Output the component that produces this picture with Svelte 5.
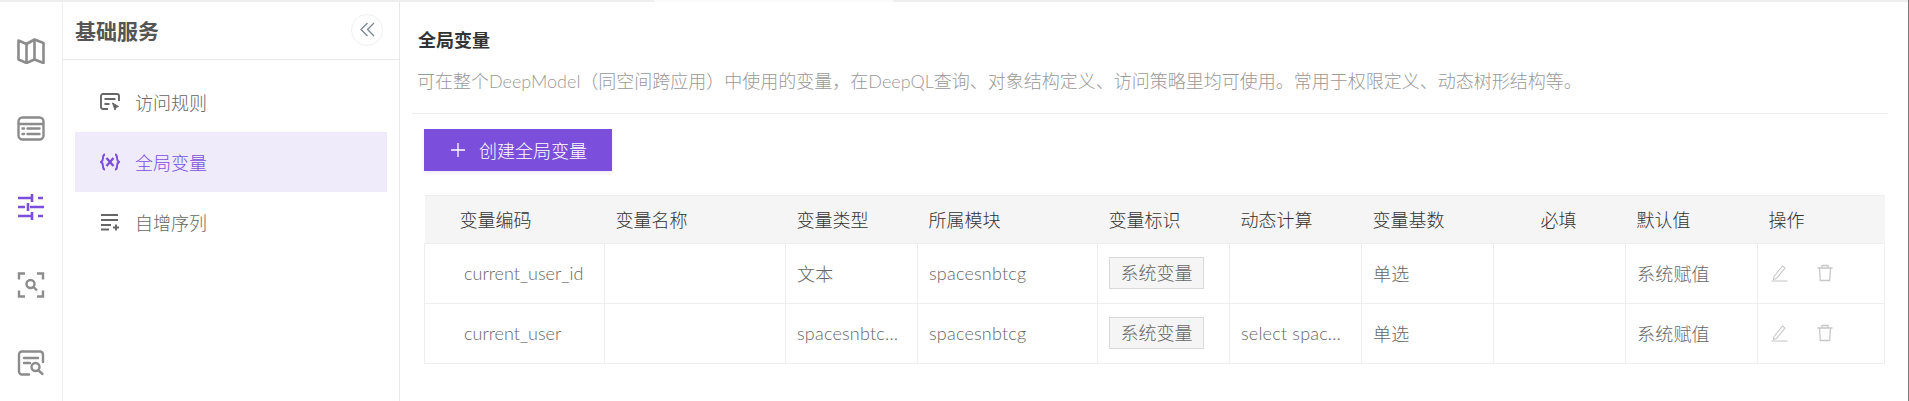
<script>
  const columns = [
    { title: "变量编码", width: 180, indent: true },
    { title: "变量名称", width: 181 },
    { title: "变量类型", width: 132 },
    { title: "所属模块", width: 180 },
    { title: "变量标识", width: 132 },
    { title: "动态计算", width: 132 },
    { title: "变量基数", width: 132 },
    { title: "必填", width: 132, center: true },
    { title: "默认值", width: 132 },
    { title: "操作", width: 127 },
  ];

  const rows = [
    { code: "current_user_id", name: "", type: "文本", module: "spacesnbtcg", calc: "", base: "单选", value: "系统赋值" },
    { code: "current_user", name: "", type: "spacesnbtcg_user", module: "spacesnbtcg", calc: "select spaces from user", base: "单选", value: "系统赋值" },
  ];
</script>

<div class="page">
  <div class="topbar">
    <span class="tab"></span>
  </div>
  <div class="layout">
    <nav class="rail">
      <button type="button" class="rail-btn" aria-label="地图">
        <svg width="28" height="26" viewBox="0 0 28 26" fill="none" stroke="currentColor" stroke-width="2.600" stroke-linejoin="round">
          <path d="M1.500 2.500 9.500 6l8-4.500 9 3.500v20l-9-3.500-8 3.500-8-3.500z" />
          <path d="M9.500 6v18.500M17.500 1.500V21" />
        </svg>
      </button>
      <button type="button" class="rail-btn" aria-label="列表">
        <svg width="28" height="26" viewBox="0 0 28 26" fill="none" stroke="currentColor" stroke-width="2.400" stroke-linecap="round">
          <rect x="1.500" y="1.500" width="25" height="22" rx="4" />
          <path d="M2 8h24M5.500 12.500h1.500M10.500 12.500h12M5.500 18h1.500M10.500 18h12" />
        </svg>
      </button>
      <button type="button" class="rail-btn active" aria-label="设置">
        <svg width="28" height="26" viewBox="0 0 28 26" fill="none" stroke="currentColor" stroke-width="2.600">
          <path d="M1 4h15M21 4h5M1 13h7M13 13h14M1 22h15M21 22h5" />
          <path d="M15 0v8M11 9v8M15 18v8" />
        </svg>
      </button>
      <button type="button" class="rail-btn" aria-label="扫描">
        <svg width="28" height="26" viewBox="0 0 28 26" fill="none" stroke="currentColor" stroke-width="2.400">
          <path d="M8 1.500H2v6M20 1.500h6v6M8 24.500H2v-6M20 24.500h6v-6" />
          <circle cx="13.500" cy="12" r="4" />
          <path d="m16.500 15 3.500 3.500" />
        </svg>
      </button>
      <button type="button" class="rail-btn" aria-label="查询">
        <svg width="28" height="26" viewBox="0 0 28 26" fill="none" stroke="currentColor" stroke-width="2.400" stroke-linecap="round">
          <path d="M12 24.500H5a3 3 0 0 1-3-3v-17a3 3 0 0 1 3-3h18a3 3 0 0 1 3 3V12" />
          <path d="M7 8h14M7 13h6" />
          <circle cx="18.500" cy="17" r="4" />
          <path d="m21.500 20.500 4 3.500" />
        </svg>
      </button>
    </nav>

    <aside class="panel">
      <header class="panel-head">
        <h2>基础服务</h2>
        <button type="button" class="collapse" aria-label="收起">
          <svg width="15" height="15" viewBox="0 0 15 15" fill="none" stroke="currentColor" stroke-width="1.300">
            <path d="M7.500 1 1 7.500 7.500 14M14 1 7.500 7.500 14 14" />
          </svg>
        </button>
      </header>
      <ul class="menu">
        <li class="menu-item">
          <svg width="20" height="18" viewBox="0 0 20 18" fill="none" stroke="currentColor" stroke-width="1.900">
            <path d="M8 16H3a2 2 0 0 1-2-2V3a2 2 0 0 1 2-2h14a2 2 0 0 1 2 2v5" />
            <path d="M4.500 6h11M4.500 11h5" />
            <path d="m12.500 10 6 3.500-2.500 1-1 2.500z" fill="currentColor" stroke-width="1" />
          </svg>
          <span>访问规则</span>
        </li>
        <li class="menu-item current">
          <svg width="20" height="18" viewBox="0 0 20 18" fill="none" stroke="currentColor" stroke-width="2">
            <path d="M5 1.500C3 1.500 3 3 3 5s0 3-2 4c2 1 2 2 2 4s0 3.500 2 3.500M15 1.500c2 0 2 1.500 2 3.500s0 3 2 4c-2 1-2 2-2 4s0 3.500-2 3.500" />
            <path d="m6.500 5 7 8M13.500 5l-7 8" stroke-width="2.400" />
          </svg>
          <span>全局变量</span>
        </li>
        <li class="menu-item">
          <svg width="20" height="18" viewBox="0 0 20 18" fill="none" stroke="currentColor" stroke-width="1.900">
            <path d="M1 2h17M1 7h17M1 12h10M1 16.500h8M13 14.500h6M16 11.500v6" />
          </svg>
          <span>自增序列</span>
        </li>
      </ul>
    </aside>

    <main class="content">
      <h1>全局变量</h1>
      <p class="desc">可在整个DeepModel（同空间跨应用）中使用的变量，在DeepQL查询、对象结构定义、访问策略里均可使用。常用于权限定义、动态树形结构等。</p>
      <div class="toolbar">
        <button type="button" class="primary">
          <svg width="16" height="16" viewBox="0 0 16 16" fill="none" stroke="currentColor" stroke-width="1.300">
            <path d="M8 1v14M1 8h14" />
          </svg>
          创建全局变量
        </button>
      </div>
      <table>
        <colgroup>
          {#each columns as col}
            <col style="width: {col.width}px" />
          {/each}
        </colgroup>
        <thead>
          <tr>
            {#each columns as col}
              <th class:indent={col.indent} class:center={col.center}>{col.title}</th>
            {/each}
          </tr>
        </thead>
        <tbody>
          {#each rows as row}
            <tr>
              <td class="code"><div class="cell">{row.code}</div></td>
              <td><div class="cell">{row.name}</div></td>
              <td><div class="cell">{row.type}</div></td>
              <td><div class="cell">{row.module}</div></td>
              <td><span class="tag">系统变量</span></td>
              <td><div class="cell">{row.calc}</div></td>
              <td><div class="cell">{row.base}</div></td>
              <td></td>
              <td><div class="cell">{row.value}</div></td>
              <td>
                <div class="actions">
                  <svg width="17" height="18" viewBox="0 0 17 18" fill="none" stroke="currentColor" stroke-width="1.100">
                    <path d="M3 12.500 11.500 2l2.500 2-8.500 10.500-3 1z" />
                    <path d="M0.500 17h16" />
                  </svg>
                  <svg width="16" height="18" viewBox="0 0 16 18" fill="none" stroke="currentColor" stroke-width="1.300">
                    <path d="M0.500 4h15M5 4V1.500h6V4M2.500 4l.8 12.500h9.400l.8-12.500" />
                  </svg>
                </div>
              </td>
            </tr>
          {/each}
        </tbody>
      </table>
    </main>
  </div>
</div>

<style>
  :global(body) {
    margin: 0;
    background: #fff;
  }

  .page {
    height: 401px;
    overflow: hidden;
    box-sizing: border-box;
    border-right: 1px solid #7a7a7a;
    font-family: Lato, "Noto Sans CJK SC", sans-serif;
    font-weight: 300;
    color: #555;
  }

  .topbar {
    height: 2px;
    background: #eeeeee;
    padding-left: 654px;
  }

  .tab {
    display: block;
    width: 239px;
    height: 2px;
    background: #fafafa;
  }

  .layout {
    display: flex;
    height: 399px;
  }

  .rail {
    flex: 0 0 63px;
    box-sizing: border-box;
    border-right: 1px solid #eeeeee;
    display: flex;
    flex-direction: column;
    align-items: center;
    padding-top: 36px;
    gap: 52px;
  }

  .rail-btn {
    all: unset;
    display: block;
    height: 26px;
    line-height: 0;
    color: #8c8c8c;
  }

  .rail-btn.active {
    color: #7b4fdb;
  }

  .panel {
    flex: 0 0 337px;
    box-sizing: border-box;
    border-right: 1px solid #e8e8e8;
  }

  .panel-head {
    height: 58px;
    box-sizing: border-box;
    border-bottom: 1px solid #e8e8e8;
    display: flex;
    align-items: center;
    justify-content: space-between;
    padding: 0 16px 2px 12px;
  }

  .panel-head h2 {
    margin: 0;
    font-size: 21px;
    font-weight: 700;
    color: #555;
  }

  .collapse {
    all: unset;
    width: 32px;
    height: 32px;
    box-sizing: border-box;
    border: 1px solid #eef0f2;
    border-radius: 50%;
    display: flex;
    align-items: center;
    justify-content: center;
    color: #7a8a94;
  }

  .menu {
    list-style: none;
    margin: 0;
    padding: 12px 12px 0 12px;
  }

  .menu-item {
    height: 60px;
    display: flex;
    align-items: center;
    gap: 15px;
    padding-left: 25px;
    font-size: 18px;
    color: #666;
  }

  .menu-item svg {
    color: #666;
  }

  .menu-item.current {
    background: #f0ebfa;
    color: #7b4fdb;
  }

  .menu-item.current svg {
    color: #7b4fdb;
  }

  .content {
    flex: 1;
    min-width: 0;
    padding: 24px 20px 0 12px;
  }

  h1 {
    margin: 0 0 0 6px;
    font-size: 18px;
    line-height: 28px;
    font-weight: 700;
    color: #333;
  }

  .desc {
    margin: 14px 0 0 5px;
    font-size: 18px;
    line-height: 26px;
    color: #999;
    white-space: nowrap;
  }

  .toolbar {
    margin-top: 19px;
    border-top: 1px solid #eeeeee;
    padding: 15px 0 24px 12px;
  }

  .primary {
    all: unset;
    display: inline-flex;
    align-items: center;
    gap: 13px;
    box-sizing: border-box;
    width: 188px;
    height: 42px;
    padding-left: 26px;
    background: #7b4fdb;
    color: #fff;
    font-size: 18px;
    box-shadow: 0 2px 4px rgba(123, 79, 219, 0.12);
  }

  table {
    margin-left: 12px;
    width: 1459px;
    table-layout: fixed;
    border-collapse: collapse;
    font-size: 18px;
  }

  th {
    box-sizing: border-box;
    height: 48px;
    padding: 0 0 2px 11px;
    background: #f5f5f5;
    border-top: 1px solid #eeeeee;
    font-weight: 300;
    text-align: left;
    color: #333;
  }

  th.indent {
    padding-left: 35px;
  }

  th.center {
    padding-left: 47px;
  }

  td {
    height: 60px;
    box-sizing: border-box;
    padding: 0 12px 2px 11px;
    border: 1px solid #eeeeee;
    color: #666;
  }

  td.code {
    padding-left: 39px;
  }

  .cell {
    white-space: nowrap;
    overflow: hidden;
    text-overflow: ellipsis;
    letter-spacing: 0.2px;
  }

  td.code .cell {
    letter-spacing: 0;
  }

  .tag {
    display: inline-block;
    box-sizing: border-box;
    width: 95px;
    height: 32px;
    line-height: 30px;
    text-align: center;
    background: #f5f5f5;
    border: 1px solid #d9d9d9;
    font-size: 18px;
    color: #666;
  }

  .actions {
    display: flex;
    align-items: center;
    gap: 29px;
    padding-left: 2px;
    color: #c8c8c8;
  }
</style>
